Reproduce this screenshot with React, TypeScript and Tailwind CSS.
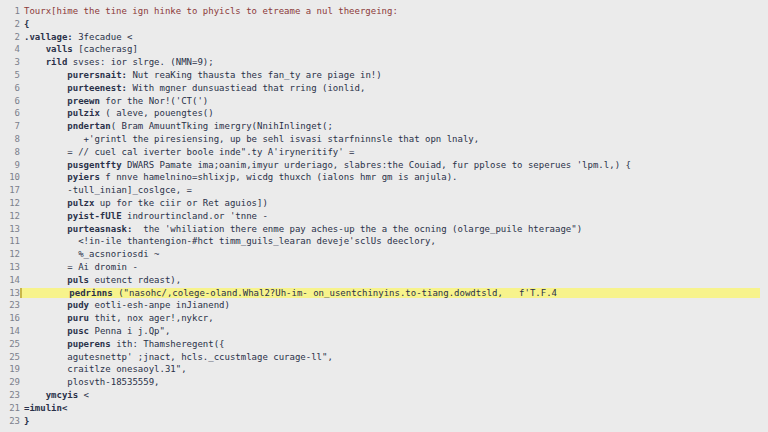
const lines: { n: string; indent: number; head?: string; text: string; red?: boolean; hl?: boolean }[] = [
  { n: "1", indent: 0, text: "Tourx[hime the tine ign hinke to phyicls to etreame a nul theergeing:", red: true },
  { n: "2", indent: 0, head: "{", text: "" },
  { n: "2", indent: 0, head: ".vallage:", text: " 3fecadue <" },
  { n: "4", indent: 4, head: "valls", text: " [cacherasg]" },
  { n: "3", indent: 4, head: "rild", text: " svses: ior slrge. (NMN=9);" },
  { n: "5", indent: 8, head: "purersnait:", text: " Nut reaKing thausta thes fan_ty are piage in!)" },
  { n: "6", indent: 8, head: "purteenest:", text: " With mgner dunsuastiead that rring (ionlid," },
  { n: "6", indent: 8, head: "preewn", text: " for the Nor!('CT(')" },
  { n: "6", indent: 8, head: "pulzix", text: " ( aleve, pouengtes()" },
  { n: "7", indent: 8, head: "pndertan", text: "( Bram AmuuntTking imergry(NnihInlinget(;" },
  { n: "8", indent: 11, text: "+'grintl the piresiensing, up be sehl isvasi starfninnsle that opn lnaly," },
  { n: "8", indent: 8, text: "= // cuel cal iverter boole inde\".ty A'iryneritify' =" },
  { n: "9", indent: 8, head: "pusgentfty", text: " DWARS Pamate ima;oanim,imyur urderiago, slabres:the Couiad, fur pplose to seperues 'lpm.l,) {" },
  { n: "10", indent: 8, head: "pyiers", text: " f nnve hamelnino=shlixjp, wicdg thuxch (ialons hmr gm is anjula)." },
  { n: "17", indent: 8, text: "-tull_inian]_coslgce, =" },
  { n: "12", indent: 8, head: "pulzx", text: " up for tke ciir or Ret aguios])" },
  { n: "12", indent: 8, head: "pyist-fUlE", text: " indrourtincland.or 'tnne -" },
  { n: "13", indent: 8, head: "purteasnask:", text: "  the 'whiliation there enme pay aches-up the a the ocning (olarge_puile hteraage\")" },
  { n: "11", indent: 10, text: "<!in-ile thantengion-#hct timm_guils_learan deveje'sclUs deeclory," },
  { n: "12", indent: 10, text: "%_acsnoriosdi ~" },
  { n: "13", indent: 8, text: "= Ai dromin -" },
  { n: "14", indent: 8, head: "puls", text: " eutenct rdeast)," },
  { n: "13", indent: 8, head: "pedrinns", text: " (\"nasohc/,colege-oland.Whal2?Uh-im- on_usentchinyins.to-tiang.dowdtsld,   f'T.F.4", hl: true },
  { n: "23", indent: 8, head: "pudy", text: " eotli-esh-anpe inJianend)" },
  { n: "16", indent: 8, head: "puru", text: " thit, nox ager!,nykcr," },
  { n: "14", indent: 8, head: "pusc", text: " Penna i j.Qp\"," },
  { n: "25", indent: 8, head: "puperens", text: " ith: Thamsheregent({" },
  { n: "25", indent: 8, text: "agutesnettp' ;jnact, hcls._ccustmlage curage-ll\"," },
  { n: "19", indent: 8, text: "craitlze onesaoyl.31\"," },
  { n: "29", indent: 8, text: "plosvth-18535559," },
  { n: "23", indent: 4, head: "ymcyis", text: " <" },
  { n: "21", indent: 0, head: "=imulin<", text: "" },
  { n: "23", indent: 0, head: "}", text: "" },
];

export default function App() {
  return (
    <div className="w-[768px] h-[432px] overflow-hidden bg-[#ebebeb] pt-[5px] font-['DejaVu_Sans_Mono',monospace] text-[9px] text-[#2a3149]">
      {lines.map((l, i) => (
        <div key={i} className="flex h-[12.8px] leading-[12.8px] whitespace-pre">
          <span className="w-[20px] shrink-0 text-right text-[#7b808c]">{l.n}</span>
          <div
            className={`flex-1 pl-[4px] ${
              l.hl ? "mr-[8px] my-[1px] leading-[10.8px] bg-[#f7f38c] border-l-2 border-[#c8b64a] pl-[2px]" : ""
            }`}
          >
            <span className={l.red ? "text-[#8c3a3a]" : ""}>
              {" ".repeat(l.indent)}
              {l.head && <span className="font-bold">{l.head}</span>}
              {l.text}
            </span>
          </div>
        </div>
      ))}
    </div>
  );
}
